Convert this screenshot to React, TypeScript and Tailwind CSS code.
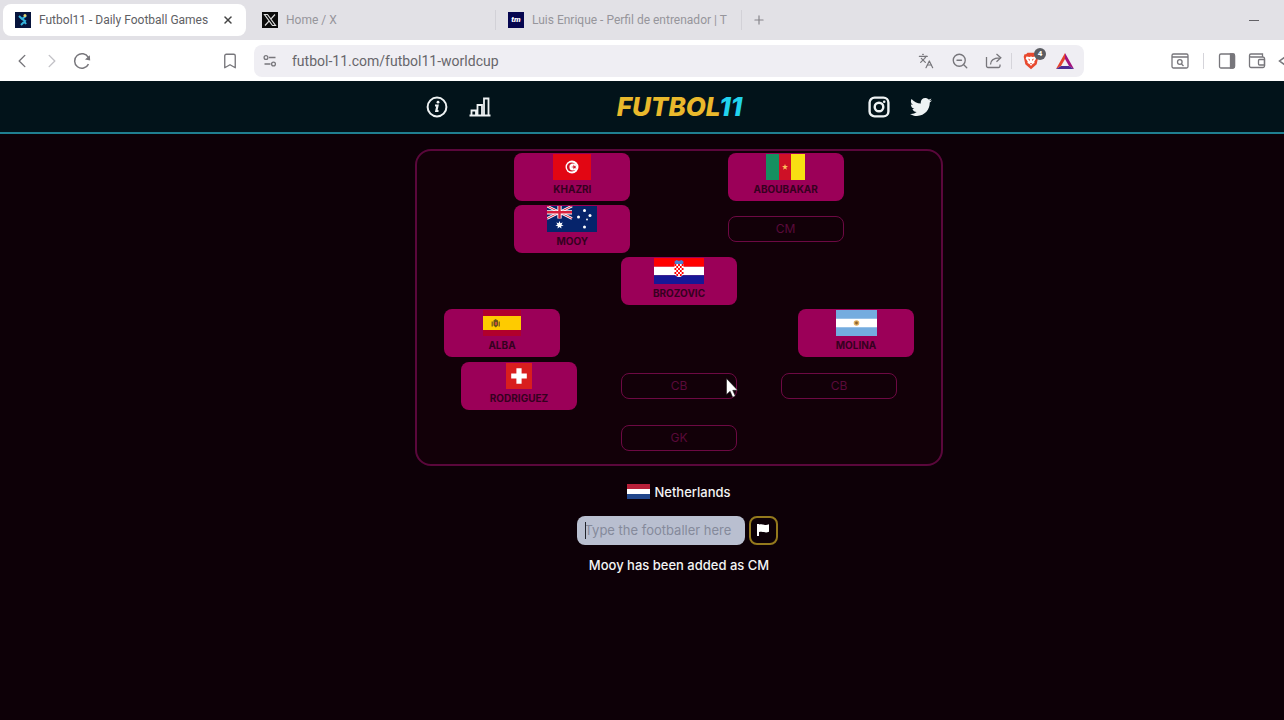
import type { ReactNode } from "react";
import { FaTwitter } from "react-icons/fa";
import { Bookmark, ChevronLeft, ChevronRight, Languages, Plus, X, ZoomOut } from "lucide-react";

type Country = "tn" | "cm" | "au" | "hr" | "es" | "ar" | "ch" | "nl";

interface Player {
  name?: string;
  country?: Country;
  position: string;
}

interface Row {
  spread: "evenly" | "wide";
  players: Player[];
}

const rows: Row[] = [
  {
    spread: "evenly",
    players: [
      { name: "KHAZRI", country: "tn", position: "ST" },
      { name: "ABOUBAKAR", country: "cm", position: "ST" },
    ],
  },
  {
    spread: "evenly",
    players: [{ name: "MOOY", country: "au", position: "CM" }, { position: "CM" }],
  },
  { spread: "evenly", players: [{ name: "BROZOVIC", country: "hr", position: "CDM" }] },
  {
    spread: "wide",
    players: [
      { name: "ALBA", country: "es", position: "LB" },
      { name: "MOLINA", country: "ar", position: "RB" },
    ],
  },
  {
    spread: "evenly",
    players: [
      { name: "RODRIGUEZ", country: "ch", position: "CB" },
      { position: "CB" },
      { position: "CB" },
    ],
  },
  { spread: "evenly", players: [{ position: "GK" }] },
];

function Flag({ country, className }: { country: Country; className: string }) {
  switch (country) {
    case "tn":
      return (
        <svg viewBox="0 0 38 26" className={className}>
          <path fill="#e20613" d="M0 0h38v26H0z" />
          <circle cx="19" cy="13" r="6.5" fill="#fff" />
          <circle cx="18.5" cy="13" r="4.6" fill="#d01226" />
          <circle cx="20" cy="13" r="3.6" fill="#fff" />
          <path fill="#d01226" d="m18 13 2.4-.6.2-2 1 1.8 2-.6-1.4 1.4 1.4 1.5-2-.6-1 1.7-.2-2z" />
        </svg>
      );
    case "cm":
      return (
        <svg viewBox="0 0 39 26" className={className}>
          <path fill="#159060" d="M0 0h13v26H0z" />
          <path fill="#ce1126" d="M13 0h13v26H13z" />
          <path fill="#f8df12" d="M25 0h14v26H25z" />
          <path fill="#fcc05a" d="m19 10 .8 2.1h2.2l-1.8 1.4.7 2.2-1.9-1.3-1.9 1.3.7-2.2-1.8-1.4h2.2z" />
        </svg>
      );
    case "au":
      return (
        <svg viewBox="0 0 50 26" className={className}>
          <path fill="#06246b" d="M0 0h50v26H0z" />
          <path stroke="#fff" strokeWidth="2.6" d="m0 0 25 12.5M25 0 0 12.5" />
          <path stroke="#d8203c" strokeWidth="1" d="m0 0 25 12.5M25 0 0 12.5" />
          <path stroke="#fff" strokeWidth="4.2" d="M12.5 0v12.5M0 6.3h25" />
          <path stroke="#d8203c" strokeWidth="2.4" d="M12.5 0v12.5M0 6.3h25" />
          <path fill="#fff" d="m12.5 15 .9 2.2 2.3-.7-1.2 2 2.1 1.3-2.4.3.2 2.5-1.9-1.7-1.9 1.7.2-2.5-2.4-.3 2.1-1.3-1.2-2 2.3.7z" />
          <g fill="#fff">
            <circle cx="37.5" cy="4.5" r="1.5" />
            <circle cx="31.5" cy="11" r="1.5" />
            <circle cx="43" cy="9.5" r="1.5" />
            <circle cx="37.5" cy="21" r="1.5" />
            <circle cx="40" cy="13.5" r=".9" />
          </g>
        </svg>
      );
    case "hr":
      return (
        <svg viewBox="0 0 50 26" className={className}>
          <path fill="#f00" d="M0 0h50v8.7H0z" />
          <path fill="#fff" d="M0 8.7h50v8.6H0z" />
          <path fill="#171796" d="M0 17.3h50V26H0z" />
          <path fill="#4a7fd0" d="m20.5 3.5 2-1.5 2.5 1 2.5-1 2 1.5-.5 3.5h-8z" />
          <path fill="#fff" d="M20.5 6h9v8.500a4.5 4.5 0 0 1-9 0z" />
          <path
            fill="#f00"
            d="M20.5 6h1.8v2h-1.8zM24.1 6h1.8v2h-1.8zM27.7 6h1.8v2h-1.8zM22.3 8h1.8v2h-1.8zM25.9 8h1.8v2h-1.8zM20.5 10h1.8v2h-1.8zM24.1 10h1.8v2h-1.8zM27.7 10h1.8v2h-1.8zM22.3 12h1.8v2h-1.8zM25.9 12h1.8v2h-1.8zM20.5 14h1.8v2h-1.8zM24.1 14h1.8v2h-1.8zM27.7 14h1.8v2h-1.8zM22.3 16h1.8v2h-1.8zM25.9 16h1.8v2h-1.8z"
          />
        </svg>
      );
    case "es":
      return (
        <svg viewBox="0 0 38 26" className={className}>
          <path fill="#b1002c" d="M0 0h38v26H0z" />
          <path fill="#fecb00" d="M0 6h38v14H0z" />
          <path fill="#8a6a1a" d="M8.5 11.500h1.500v5H8.500zM15.500 11.500H17v5h-1.500z" />
          <path fill="#6b5518" d="M10.5 10.5 12.5 9l2.500 1.500v5l-2.200 2-2.300-2z" />
          <path fill="#c9503a" d="M12 12h2v3h-2z" />
        </svg>
      );
    case "ar":
      return (
        <svg viewBox="0 0 41 26" className={className}>
          <path fill="#74acdf" d="M0 0h41v26H0z" />
          <path fill="#fff" d="M0 8.7h41v8.6H0z" />
          <circle cx="20.5" cy="13" r="2.8" fill="#e0b060" />
          <circle cx="20.5" cy="13" r="1.4" fill="#8c6030" />
        </svg>
      );
    case "ch":
      return (
        <svg viewBox="0 0 25 25" className={className}>
          <path fill="#d81e1e" d="M0 0h25v25H0z" />
          <path fill="#fff" d="M10 5h5v5h5v5h-5v5h-5v-5H5v-5h5z" />
        </svg>
      );
    case "nl":
      return (
        <svg viewBox="0 0 23 15" className={className}>
          <path fill="#b8203a" d="M0 0h23v5H0z" />
          <path fill="#fff" d="M0 5h23v5H0z" />
          <path fill="#21468b" d="M0 10h23v5H0z" />
        </svg>
      );
  }
}

function PlayerSlot({ player }: { player: Player }) {
  if (!player.name || !player.country) {
    return (
      <button className="h-[26px] w-[116px] rounded-lg border border-[#6d0943] text-xs font-normal text-[#5a0a3a]">
        {player.position}
      </button>
    );
  }
  return (
    <button className="flex h-12 w-[116px] flex-col items-center rounded-lg bg-[#9b0058] pt-px text-[10px] font-bold leading-4 text-[#35001f]">
      <Flag country={player.country} className="h-[26px]" />
      <span className="pt-px">{player.name}</span>
    </button>
  );
}

function Tab({ icon, title, active }: { icon: ReactNode; title: string; active?: boolean }) {
  return (
    <button
      className={
        active
          ? "flex h-8 w-[243px] items-center gap-2 rounded-lg bg-white px-3 text-xs text-[#606064]"
          : "flex h-8 w-[245px] items-center gap-2 px-3 text-xs text-[#96959b]"
      }
    >
      {icon}
      <span className="flex-1 whitespace-nowrap text-left">{title}</span>
      {active && <X className="size-3 text-[#444]" strokeWidth={3} />}
    </button>
  );
}

function TabStrip() {
  return (
    <div className="flex h-10 items-center bg-[#e2e1e6] pl-[3px]">
      <Tab
        active
        title="Futbol11 - Daily Football Games"
        icon={
          <svg viewBox="0 0 16 16" className="size-4">
            <path fill="#06143c" d="M0 0h16v16H0z" />
            <path stroke="#35b4dc" strokeWidth="2" fill="none" d="m4 4 3 3 4-3M7 7l3 2-4 4M9 9l2 3" />
            <circle cx="10" cy="3.5" r="1.5" fill="#e4d36a" />
          </svg>
        }
      />
      <div className="flex items-center pl-1">
        <Tab
          title="Home / X"
          icon={
            <svg viewBox="0 0 16 16" className="size-4">
              <path fill="#0b0b0b" d="M0 0h16v16H0z" />
              <path fill="none" stroke="#ddd" strokeWidth="1.2" d="M2.500 2.500h3l8 11h-3zM13 2.500 8.800 7.200M7 9.200l-4 4.300" />
            </svg>
          }
        />
        <span className="h-5 w-px bg-[#d2d1d7]" />
        <Tab
          title="Luis Enrique - Perfil de entrenador | T"
          icon={
            <span className="flex size-4 items-center justify-center bg-[#060650] text-[8px] font-black italic text-white">
              tm
            </span>
          }
        />
        <span className="h-5 w-px bg-[#d2d1d7]" />
      </div>
      <button aria-label="New tab" className="pl-2.5">
        <Plus className="size-3.5 text-[#858489]" />
      </button>
      <button aria-label="Minimize" className="ml-auto mr-[25px] py-2">
        <span className="block h-px w-2.5 bg-[#626166]" />
      </button>
    </div>
  );
}

function LineIcon({ children }: { children: ReactNode }) {
  return (
    <svg viewBox="0 0 18 18" className="size-[18px]" fill="none" stroke="currentColor" strokeWidth="1.3">
      {children}
    </svg>
  );
}

function Toolbar() {
  return (
    <div className="flex h-[41px] items-center bg-white text-[#77767b]">
      <div className="flex gap-3 pl-[13px]">
        <button aria-label="Back">
          <ChevronLeft className="size-[18px] scale-125" strokeWidth={1.5} />
        </button>
        <button aria-label="Forward" className="text-[#c3c2c7]">
          <ChevronRight className="size-[18px] scale-125" strokeWidth={1.5} />
        </button>
        <button aria-label="Reload">
          <LineIcon>
            <path strokeWidth="1.5" d="M15.5 12.2A7.3 7.3 0 1 1 15.3 5.4" />
            <path fill="currentColor" stroke="none" d="m16.8 3.200.4 5.200-5.200-1z" />
          </LineIcon>
        </button>
      </div>
      <button aria-label="Bookmark this tab" className="ml-[130px]">
        <Bookmark className="size-[18px]" strokeWidth={1.8} />
      </button>
      <div className="ml-[15px] flex h-8 flex-1 items-center rounded-lg bg-[#efeef3] pl-[7px] pr-2.5">
        <button aria-label="Site settings">
          <LineIcon>
            <circle cx="5" cy="5.5" r="1.9" />
            <circle cx="12.5" cy="12" r="1.9" />
            <path d="M8 5.500h6.500M3.500 12h6" />
          </LineIcon>
        </button>
        <input
          aria-label="Address"
          readOnly
          value="futbol-11.com/futbol11-worldcup"
          className="ml-[13px] min-w-0 flex-1 bg-transparent text-sm text-[#67666b] outline-none"
        />
        <div className="flex gap-4">
          <button aria-label="Translate">
            <Languages className="size-[18px] p-px" strokeWidth={1.8} />
          </button>
          <button aria-label="Zoom out">
            <ZoomOut className="size-[18px]" strokeWidth={1.8} />
          </button>
          <button aria-label="Share">
            <LineIcon>
              <path d="M1.5 5v9A1.5 1.5 0 0 0 3 15.500h10.500A1.500 1.500 0 0 0 15 14v-1.500M5.500 12.500c0-4.500 2.500-6.500 9-6.700M11.500 2l4.300 3.800-4.300 3.900" />
            </LineIcon>
          </button>
        </div>
        <span className="ml-2 mr-2.5 h-4 w-px bg-[#d5d4da]" />
        <div className="flex gap-4">
          <button aria-label="Shields" className="relative">
            <svg viewBox="0 0 18 18" className="size-[18px]">
              <path fill="#e8492f" d="M5.500.8h7L14 2.300h1.500l.8 2.500-1.600 7.500L9 17.200l-5.700-4.900L1.700 4.800l.8-2.500H4z" />
              <path fill="#fff" d="m4.500 4.500 3 .5L9 4.500l1.500.5 3-.5.8 2-2 3 .2 1.500-2 1L9 14l-1.500-2-2-1 .2-1.500-2-3z" />
              <path fill="#e8492f" d="m6 6.500 2 1L7.500 9zM12 6.500l-2 1 .5 1.500zM8 11h2l-1 1.500z" />
            </svg>
            <span className="absolute -right-1.5 -top-1 flex size-3 items-center justify-center rounded-full bg-[#5b5d63] text-[8px] font-bold text-white">
              4
            </span>
          </button>
          <button aria-label="Rewards">
            <svg viewBox="0 0 18 18" className="size-[18px]">
              <path fill="#e5432d" d="M9 1 0 17l5-3L9 7z" />
              <path fill="#a3127d" d="M9 1v6l4 7 5 3z" />
              <path fill="#4b2a94" d="M0 17h18l-5-3H5z" />
            </svg>
          </button>
        </div>
      </div>
      <div className="flex items-center pl-[87px]">
        <button aria-label="Search tabs">
          <LineIcon>
            <rect x="1" y="2" width="16" height="14" rx="1.5" />
            <path d="M1 5h16M10.500 12l2 2" />
            <circle cx="8.8" cy="10" r="2.3" />
          </LineIcon>
        </button>
        <span className="mx-3.5 h-4 w-px bg-[#d5d4da]" />
        <div className="flex gap-3">
          <button aria-label="Sidebar">
            <LineIcon>
              <rect x="1.5" y="2" width="15" height="14" rx="1.5" />
              <path fill="currentColor" d="M12.500 2H15a1.500 1.500 0 0 1 1.500 1.500v11A1.500 1.500 0 0 1 15 16h-2.500z" />
            </LineIcon>
          </button>
          <button aria-label="Wallet">
            <LineIcon>
              <path d="M1.500 3.500V14A1.500 1.500 0 0 0 3 15.500h12a1.500 1.500 0 0 0 1.500-1.500V6.500A1.500 1.500 0 0 0 15 5H3a1.500 1.500 0 0 1 0-3h11.500v3" />
              <path d="M16.500 7.500h-5a1 1 0 0 0-1 1V12a1 1 0 0 0 1 1h5z" />
            </LineIcon>
          </button>
        </div>
        <button aria-label="More" className="w-[18px] overflow-hidden pl-3">
          <LineIcon>
            <path strokeWidth="1.500" d="M7 5 1.500 9 7 13" />
          </LineIcon>
        </button>
      </div>
    </div>
  );
}

function Header() {
  return (
    <header className="flex h-[53px] items-center justify-center border-b-2 border-[#1f7f90] bg-[#02131a]">
      <div className="flex w-[506px] items-center justify-between text-[#eef2f3]">
        <div className="flex gap-[21px]">
          <button aria-label="How to play">
            <svg viewBox="0 0 22 22" className="size-[22px]" fill="none" stroke="currentColor">
              <circle cx="11" cy="11" r="9.4" strokeWidth="2" />
              <path strokeWidth="2.2" d="M9 9.500h2.500L10.300 15h2.200" />
              <circle cx="12" cy="6.2" r="1.4" fill="currentColor" stroke="none" />
            </svg>
          </button>
          <button aria-label="Statistics">
            <svg viewBox="0 0 22 22" className="size-[22px]" fill="none" stroke="currentColor" strokeWidth="1.8">
              <path d="M.5 19.500h21M2.500 19.500v-5H7v5M8.500 19.500V9H13v10.500M15 19.500v-17h4.500v17" />
            </svg>
          </button>
        </div>
        <h1 className="text-[26px] font-extrabold italic leading-8 text-[#eab92c]">
          FUTBOL<span className="text-[#22d3ee]">11</span>
        </h1>
        <div className="flex gap-5">
          <a href="#instagram" aria-label="Instagram">
            <svg viewBox="0 0 22 22" className="size-[22px]" fill="none" stroke="currentColor">
              <rect x="1.6" y="1.6" width="18.8" height="18.8" rx="5" strokeWidth="2.4" />
              <circle cx="11" cy="11" r="4.3" strokeWidth="2.4" />
              <circle cx="16.2" cy="5.8" r="1.3" fill="currentColor" stroke="none" />
            </svg>
          </a>
          <a href="#twitter" aria-label="Twitter">
            <FaTwitter className="size-[22px]" />
          </a>
        </div>
      </div>
    </header>
  );
}

function Pitch() {
  return (
    <section className="relative grid aspect-[5/3] w-[528px] grid-rows-6 rounded-2xl border-2 border-[#5a073b] bg-[#120008]">
      {rows.map((row, i) => (
        <div
          key={i}
          className={
            row.spread === "wide"
              ? "flex items-center justify-between px-[27px]"
              : "flex items-center justify-evenly"
          }
        >
          {row.players.map((player, j) => (
            <PlayerSlot key={j} player={player} />
          ))}
        </div>
      ))}
      {/* Mouse pointer */}
      <svg viewBox="0 0 12 20" className="pointer-events-none absolute left-[309px] top-[227px] h-5 w-3">
        <path fill="#fff" stroke="#111" strokeWidth=".5" d="M.5.5v16l3.600-3.300 2.600 6 2.600-1.100-2.600-5.800h4.900z" />
      </svg>
    </section>
  );
}

export default function App() {
  return (
    <div className="flex min-h-screen flex-col overflow-hidden bg-[#0d0007] font-['Roboto',sans-serif]">
      <TabStrip />
      <Toolbar />
      <div className="w-[calc(100%+74px)] font-['Inter',sans-serif]">
        <Header />
        <main className="flex flex-col items-center pt-[15px] text-[13px] font-medium leading-5 text-[#f4f4f4]">
          <Pitch />
          <label htmlFor="footballer" className="flex items-center gap-1 pt-4">
            <Flag country="nl" className="h-[15px]" />
            Netherlands
          </label>
          <form className="flex gap-1 pr-1 pt-3.5" onSubmit={(e) => e.preventDefault()}>
            <div className="relative">
              <input
                id="footballer"
                type="text"
                placeholder="Type the footballer here"
                className="h-[29px] w-[168px] rounded-lg bg-[#b9bfd0] px-2 font-normal text-black outline-none placeholder:text-[#858a9b]"
              />
              <span className="absolute left-2 top-1.5 h-[17px] w-px bg-[#22242c]" />
            </div>
            <button
              aria-label="Give up"
              className="flex size-[29px] items-center justify-center rounded-lg border-2 border-[#94791d]"
            >
              <svg viewBox="0 0 14 14" className="size-3.5">
                <path fill="#fff" d="M1 1h2v.6C5 .8 6.500 1.200 8 1.700c1.700.5 3 .4 5-.5v7.600c-2 .8-3.500.8-5 .3-1.700-.5-3-.7-5 0V13H1z" />
              </svg>
            </button>
          </form>
          <p className="pt-2.5">Mooy has been added as CM</p>
        </main>
      </div>
    </div>
  );
}
